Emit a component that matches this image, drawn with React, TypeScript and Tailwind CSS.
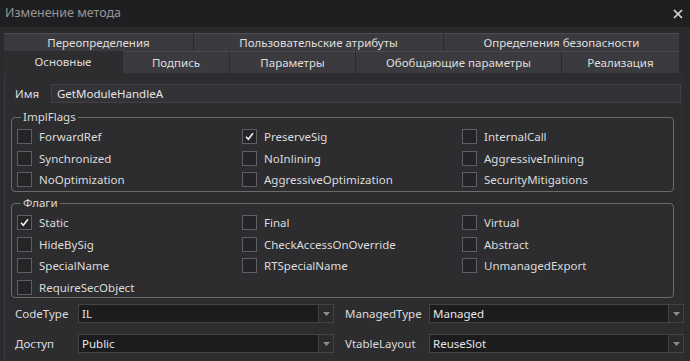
import React from "react";

const row1 = [
  { label: "Переопределения", w: "w-[190px]" },
  { label: "Пользовательские атрибуты", w: "w-[250px]" },
  { label: "Определения безопасности", w: "w-[236px]" },
];

const row2 = [
  { label: "Основные", w: "w-[119px]", active: true },
  { label: "Подпись", w: "w-[107px]" },
  { label: "Параметры", w: "w-[126px]" },
  { label: "Обобщающие параметры", w: "w-[206px]" },
  { label: "Реализация", w: "w-[118px]" },
];

const implFlags: [string, boolean][] = [
  ["ForwardRef", false],
  ["PreserveSig", true],
  ["InternalCall", false],
  ["Synchronized", false],
  ["NoInlining", false],
  ["AggressiveInlining", false],
  ["NoOptimization", false],
  ["AggressiveOptimization", false],
  ["SecurityMitigations", false],
];

const flags: [string, boolean][] = [
  ["Static", true],
  ["Final", false],
  ["Virtual", false],
  ["HideBySig", false],
  ["CheckAccessOnOverride", false],
  ["Abstract", false],
  ["SpecialName", false],
  ["RTSpecialName", false],
  ["UnmanagedExport", false],
  ["RequireSecObject", false],
];

function Check({ label, checked }: { label: string; checked: boolean }) {
  return (
    <div className="flex items-center h-[21.5px]">
      <div className="w-[15px] h-[15px] border border-[#5f5f63] bg-[#252527] flex items-center justify-center shrink-0">
        {checked && (
          <svg width="11" height="11" viewBox="0 0 11 11" fill="none">
            <path d="M2 5.8 L4.3 8.3 L9 2.2" stroke="#f0f0f0" strokeWidth="1.6" />
          </svg>
        )}
      </div>
      <span className="ml-[7px] text-[#dcdcdc] whitespace-nowrap">{label}</span>
    </div>
  );
}

function Group({
  title,
  items,
  h,
}: {
  title: string;
  items: [string, boolean][];
  h: string;
}) {
  return (
    <fieldset className={`mx-[10px] ${h} border border-[#6b6b6e] rounded-[4px] px-[5px]`}>
      <legend className="ml-[4px] px-[2px] text-[#dcdcdc] leading-[16px]">{title}</legend>
      <div className="grid grid-cols-[225px_220px_1fr] pt-[1px]">
        {items.map(([l, c]) => (
          <Check key={l} label={l} checked={c} />
        ))}
      </div>
    </fieldset>
  );
}

function Combo({ value, w }: { value: string; w: string }) {
  return (
    <div className={`${w} h-[19px] bg-[#1c1c1e] border border-[#434346] flex items-center`}>
      <span className="flex-1 pl-[3px] text-[#e6e6e6]">{value}</span>
      <div className="w-[15px] h-full border-l border-[#434346] bg-[#2a2a2d] flex items-center justify-center">
        <svg width="7" height="4" viewBox="0 0 7 4">
          <path d="M0 0 H7 L3.5 4 Z" fill="#8c8c8c" />
        </svg>
      </div>
    </div>
  );
}

export default function App() {
  return (
    <div
      className="w-[690px] h-[361px] bg-[#2b2b2e] overflow-hidden text-[11.5px]"
      style={{ fontFamily: '"Noto Sans", "Open Sans", sans-serif' }}
    >
      {/* title bar */}
      <div className="h-[27px] bg-[#1f1f22] flex items-center justify-between pl-[5px] pr-[7px]">
        <span className="text-[12.5px] text-[#969696]">Изменение метода</span>
        <svg width="10" height="10" viewBox="0 0 10 10">
          <path d="M1 1 L9 9 M9 1 L1 9" stroke="#d8d8d8" strokeWidth="1.7" />
        </svg>
      </div>

      {/* tabs */}
      <div className="mt-[6px] ml-[4px]">
        <div className="flex h-[18px]">
          {row1.map((t) => (
            <div
              key={t.label}
              className={`${t.w} bg-[#3b3b3f] border-t border-[#4a4a4f] border-r border-r-[#2b2b2e] flex items-center justify-center text-[#dedede]`}
            >
              {t.label}
            </div>
          ))}
        </div>
        <div className="flex h-[22px]">
          {row2.map((t) => (
            <div
              key={t.label}
              className={`${t.w} ${
                t.active ? "bg-[#2d2d30]" : "bg-[#3b3b3f] border-t border-[#4a4a4f]"
              } border-r border-r-[#2b2b2e] flex items-center justify-center text-[#dedede]`}
            >
              {t.label}
            </div>
          ))}
        </div>
      </div>

      {/* panel */}
      <div className="ml-[4px] mr-[6px] h-[288px] bg-[#2d2d30] border-l border-[#3a3a3e]">
        <div className="flex items-center pt-[11px] pl-[10px] pr-[3px]">
          <span className="w-[36px] text-[#dcdcdc]">Имя</span>
          <div className="flex-1 h-[19px] bg-[#333337] border border-[#424246] flex items-center pl-[5px] text-[#e6e6e6]">
            GetModuleHandleA
          </div>
        </div>

        <div className="mt-[6px] -ml-[4px]">
          <Group title="ImplFlags" items={implFlags} h="h-[83px]" />
        </div>
        <div className="mt-[3px] -ml-[4px]">
          <Group title="Флаги" items={flags} h="h-[103px]" />
        </div>

        <div className="flex items-center mt-[6px] pl-[10px]">
          <span className="w-[63px] text-[#dcdcdc]">CodeType</span>
          <Combo value="IL" w="w-[256px]" />
          <span className="ml-[11px] w-[84px] text-[#dcdcdc]">ManagedType</span>
          <Combo value="Managed" w="w-[255px]" />
        </div>
        <div className="flex items-center mt-[11px] pl-[10px]">
          <span className="w-[63px] text-[#dcdcdc]">Доступ</span>
          <Combo value="Public" w="w-[256px]" />
          <span className="ml-[11px] w-[84px] text-[#dcdcdc]">VtableLayout</span>
          <Combo value="ReuseSlot" w="w-[255px]" />
        </div>
      </div>
    </div>
  );
}
